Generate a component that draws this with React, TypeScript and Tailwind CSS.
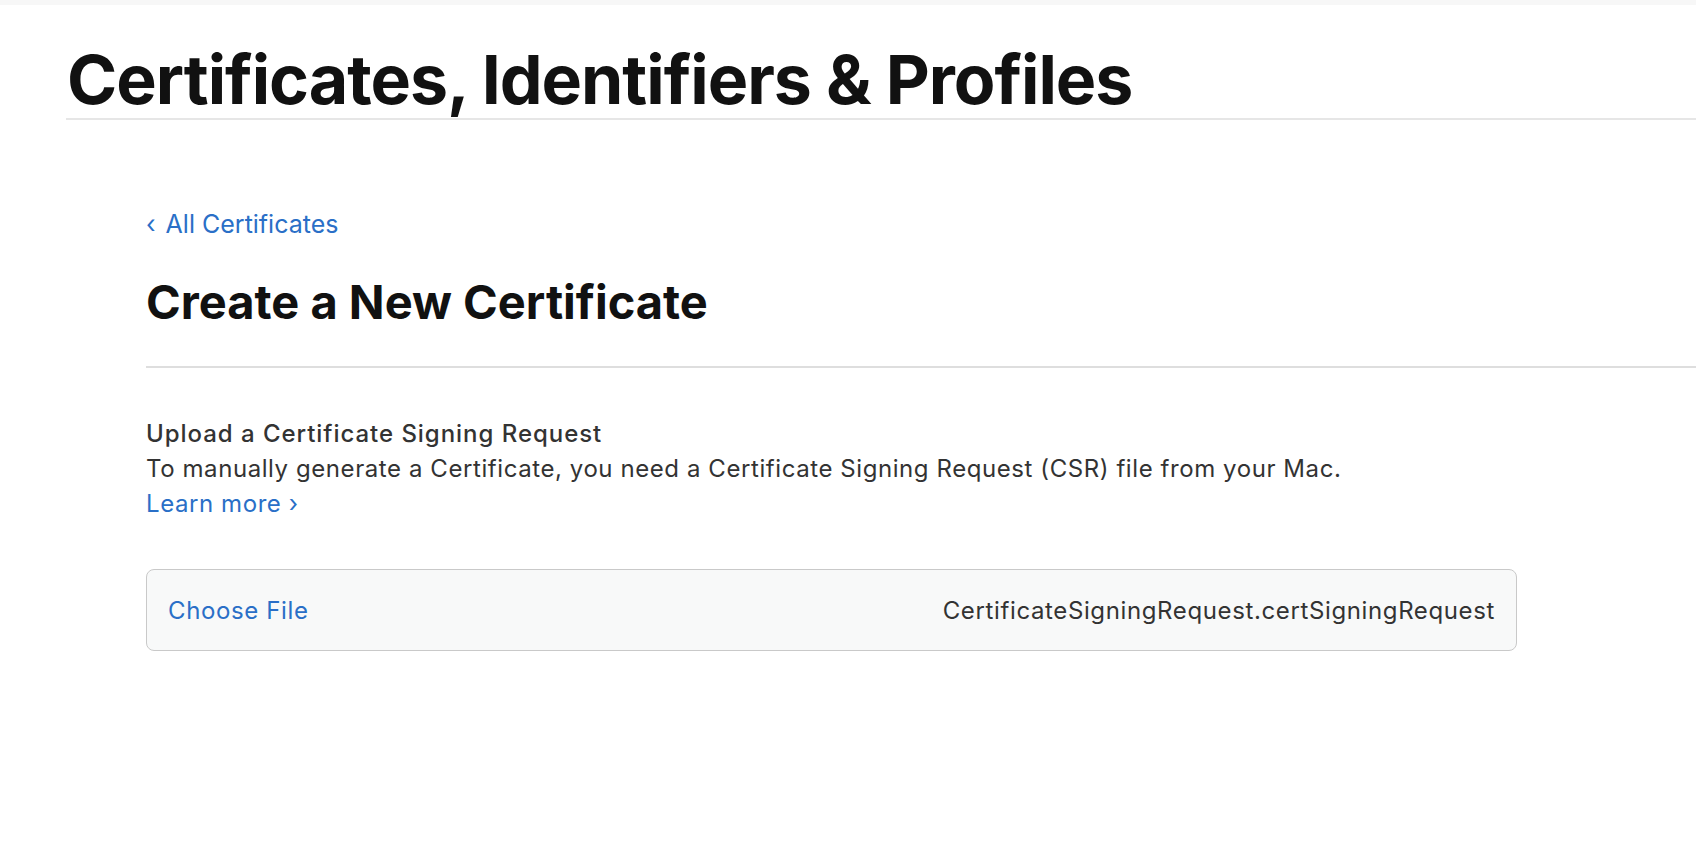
export default function App() {
  return (
    <div className="min-h-screen bg-white font-['Inter',sans-serif] text-[#1d1d1f]">
      {/* top strip */}
      <div className="h-[5px] bg-[#f7f7f7]" />

      {/* page title */}
      <header className="pl-[66px]">
        <h1 className="mt-[40px] pl-[1px] text-[68px] font-bold leading-none tracking-[-0.015em] text-[#111]">
          Certificates, Identifiers &amp; Profiles
        </h1>
        <div className="mt-[5px] h-[2px] bg-[#e6e6e6]" />
      </header>

      <main className="pl-[146px]">
        <a href="#" className="mt-[87px] flex items-center text-[25px] leading-[34px] text-[#2a6fc7]">
          <span className="mr-[10px]">‹</span>
          All Certificates
        </a>
        <h2 className="mt-[37px] text-[47px] font-bold leading-none text-[#111]">
          Create a New Certificate
        </h2>
        <div className="mt-[41px] h-[2px] bg-[#dedede]" />

        <section className="mt-[48px] pr-[179px] text-[24px] leading-[35px] tracking-[0.024em] text-[#333]">
          <h3 className="font-medium tracking-[0.04em]">Upload a Certificate Signing Request</h3>
          <p>To manually generate a Certificate, you need a Certificate Signing Request (CSR) file from your Mac.</p>
          <a href="#" className="text-[#2a6fc7]">Learn more ›</a>

          <div className="mt-[48px] flex h-[82px] items-center justify-between rounded-[8px] border-[1.5px] border-[#c9c9c9] bg-[#f8f9f9] px-[21px] tracking-[0.026em]">
            <span className="text-[#2a6fc7]">Choose File</span>
            <span className="text-[#333]">CertificateSigningRequest.certSigningRequest</span>
          </div>
        </section>
      </main>
    </div>
  )
}
